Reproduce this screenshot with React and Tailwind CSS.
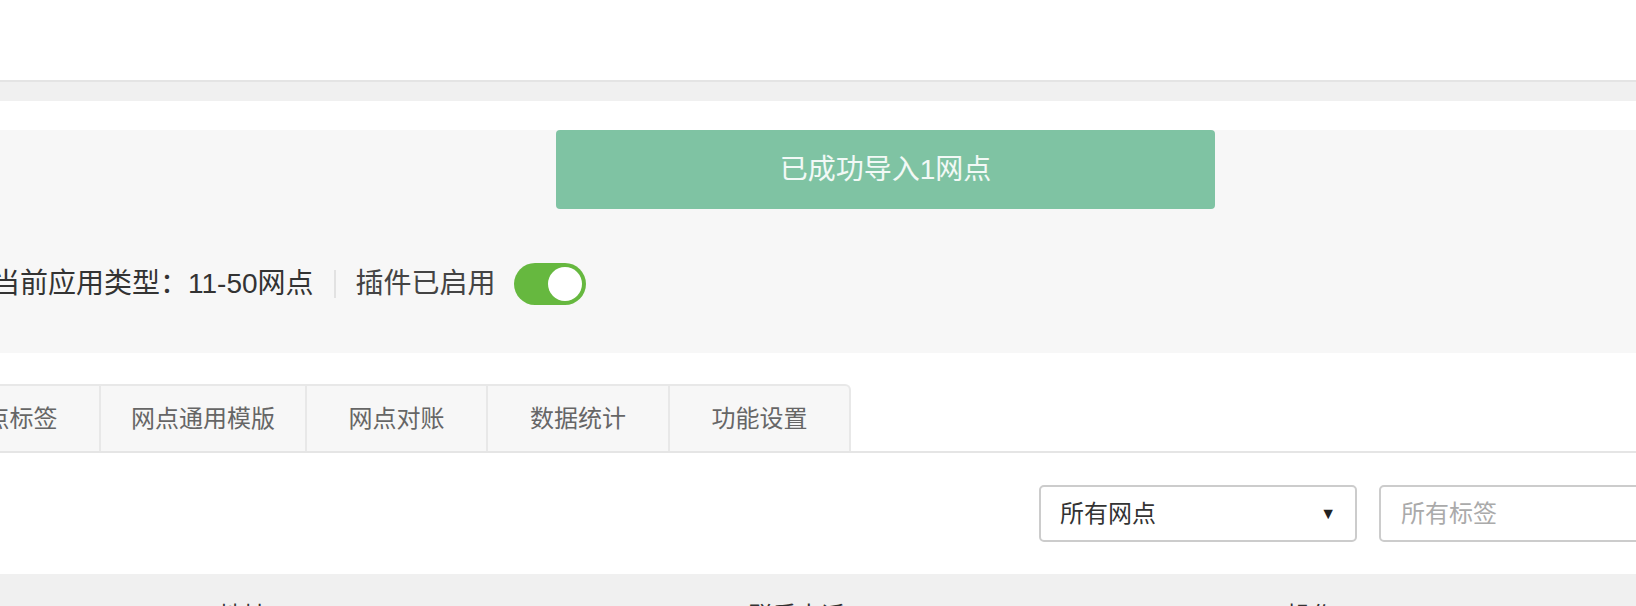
import React from "react";

const tabs = [
  { label: "网点标签", w: "w-[181px]" },
  { label: "网点通用模版", w: "w-[206px]" },
  { label: "网点对账", w: "w-[181px]" },
  { label: "数据统计", w: "w-[182px]" },
  { label: "功能设置", w: "w-[183px]" },
];

function Toggle() {
  return (
    <div className="ml-[18px] flex h-[42px] w-[72px] shrink-0 items-center justify-end rounded-full bg-[#66b83f] p-[4px]">
      <div className="h-[34px] w-[34px] rounded-full bg-white" />
    </div>
  );
}

export default function App() {
  return (
    <div className="h-[606px] w-[1636px] overflow-hidden bg-white font-['Liberation_Sans','Noto_Sans_CJK_SC',sans-serif]">
      {/* 顶部栏 */}
      <div className="h-[80px] bg-white" />
      <div className="h-[2px] bg-[#e4e4e4]" />
      <div className="h-[19px] bg-[#f0f0f0]" />
      <div className="h-[29px] bg-white" />

      {/* 状态面板 */}
      <section className="h-[223px] bg-[#f7f7f7]">
        <div className="ml-[556px] flex h-[79px] w-[659px] items-center justify-center rounded-[4px] bg-[#7fc3a3] text-[28px] text-white/90">
          已成功导入1网点
        </div>
        <div className="ml-[-8px] mt-[54px] flex h-[42px] items-center text-[28px]">
          <span className="shrink-0 text-[#333]">当前应用类型：11-50网点</span>
          <span className="mx-[20px] h-[28px] w-[2px] shrink-0 bg-[#e2e2e2]" />
          <span className="shrink-0 text-[#444]">插件已启用</span>
          <Toggle />
        </div>
      </section>

      {/* 标签页 */}
      <div className="mt-[31px] flex h-[69px] border-b-2 border-[#e5e5e5]">
        <div className="ml-[-82px] flex shrink-0">
          {tabs.map((t, i) => (
            <div
              key={t.label}
              className={`${t.w} flex shrink-0 items-center justify-center border-t-2 border-l-2 border-[#e8e8e8] bg-[#f7f7f7] text-[24px] text-[#666] ${
                i === tabs.length - 1 ? "rounded-tr-[6px] border-r-2" : ""
              }`}
            >
              {t.label}
            </div>
          ))}
        </div>
      </div>

      {/* 筛选 */}
      <div className="mt-[32px] flex h-[57px]">
        <div className="ml-[1039px] flex w-[318px] shrink-0 items-center justify-between rounded-[5px] border-2 border-[#cccccc] pl-[19px] pr-[19px] text-[24px] text-[#333]">
          <span>所有网点</span>
          <span className="text-[16px] text-[#222]">▼</span>
        </div>
        <div className="ml-[22px] flex w-[300px] shrink-0 items-center rounded-[5px] border-2 border-[#cccccc] pl-[20px] text-[24px] text-[#aaa]">
          所有标签
        </div>
      </div>

      {/* 表头 */}
      <div className="mt-[32px] flex h-[60px] items-start bg-[#f0f0f0] pt-[24px] text-[24px] text-[#333]">
        <span className="ml-[219px]">地址</span>
        <span className="ml-[482px]">联系电话</span>
        <span className="ml-[442px]">操作</span>
      </div>
    </div>
  );
}
